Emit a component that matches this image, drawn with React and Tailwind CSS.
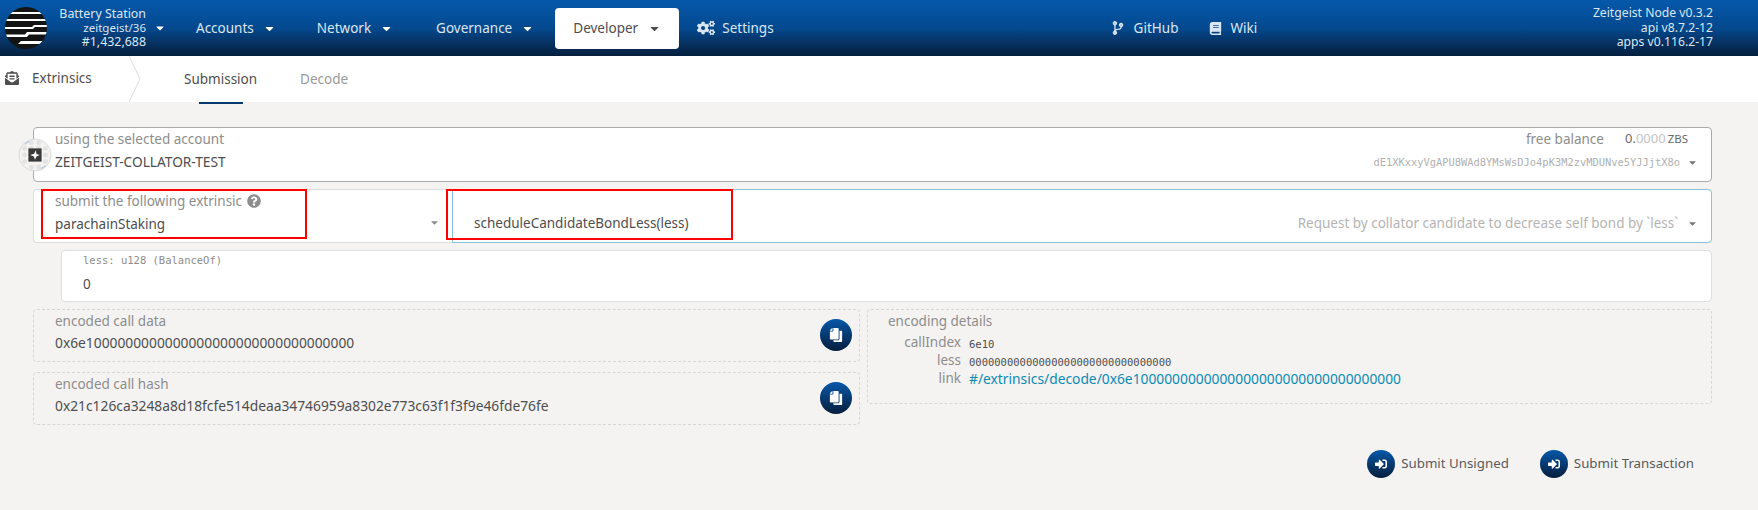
import React from 'react';
import { FaCaretDown, FaCogs, FaCodeBranch, FaBook, FaEnvelopeOpenText, FaCopy, FaSignInAlt, FaQuestionCircle } from 'react-icons/fa';

const sans = "font-['Noto_Sans',sans-serif]";
const mono = "font-['DejaVu_Sans_Mono',monospace]";

function ChainLogo() {
  return (
    <svg viewBox="0 0 42 42" className="w-[42px] h-[42px] shrink-0">
      <defs>
        <clipPath id="disc"><circle cx="21" cy="21" r="21" /></clipPath>
      </defs>
      <circle cx="21" cy="21" r="21" fill="#141414" />
      <g clipPath="url(#disc)" fill="#fff">
        <path d="M0 5H42V7H0Z" />
        <path d="M0 12H42V14H0Z" />
        <path d="M0 20H27L29 18H42V20H30L28 22H0Z" />
        <path d="M0 27.5H20L22 25H42V27.5H24L22 30H0Z" />
        <path d="M13 37L16 34H42V37Z" />
      </g>
    </svg>
  );
}

function Identicon() {
  const dots = [[14,5],[22,5],[7,11],[14,11],[22,11],[29,11],[7,18],[29,18],[7,25],[29,25],[14,31],[22,31]];
  return (
    <svg viewBox="0 0 36 36" className="w-[34px] h-[34px]">
      <circle cx="18" cy="18" r="17" fill="#f4f3f2" stroke="#d8d8d8" />
      <path d="M7 7A16 16 0 0 1 12 3.5" fill="none" stroke="#8fb8dc" />
      <path d="M29 29A16 16 0 0 1 24 32.5" fill="none" stroke="#8fb8dc" />
      {dots.map(([x, y]) => <circle key={`${x}-${y}`} cx={x} cy={y} r="2.6" fill="#e2e2e2" />)}
      <rect x="11" y="11" width="14" height="14" fill="#3a3a3a" />
      <path d="M19 13L19.5 17L23 18L19.5 19.5L18 23L16.8 19.5L13 18L17 16.8Z" fill="#fff" />
    </svg>
  );
}

function NavItem({ label, className }) {
  return (
    <div className={`flex items-center text-[#dbe6f2] ${className}`}>
      <span>{label}</span>
      <FaCaretDown className="ml-[9px] text-[13px] text-white" />
    </div>
  );
}

function Header() {
  return (
    <header className="h-14 bg-gradient-to-b from-[#0558ab] via-[#04498f] to-[#051f3e] flex items-center text-[13.5px] pl-[5px] pr-[45px]">
      <ChainLogo />
      <div className="w-[88px] ml-[11px] flex flex-col items-end whitespace-nowrap leading-[14px] text-[#dbe6f2] text-[12.4px]">
        <span>Battery Station</span>
        <span className="text-[11.5px]">zeitgeist/36</span>
        <span>#1,432,688</span>
      </div>
      <FaCaretDown className="ml-[8px] text-[12px] text-white" />
      <NavItem label="Accounts" className="ml-[30px]" />
      <NavItem label="Network" className="ml-[41px]" />
      <NavItem label="Governance" className="ml-[43px]" />
      <div className="ml-[21px] h-[41px] w-[124px] bg-white rounded-[4px] flex items-center justify-center text-[#4e4e4e]">
        <span>Developer</span>
        <FaCaretDown className="ml-[10px] text-[13px] text-[#4e4e4e]" />
      </div>
      <div className="ml-[18px] flex items-center text-[#dbe6f2]">
        <FaCogs className="text-[18px] mr-[7px]" />
        <span>Settings</span>
      </div>
      <div className="ml-[337px] flex items-center text-[#dbe6f2]">
        <FaCodeBranch className="text-[14px] mr-[9px]" />
        <span>GitHub</span>
      </div>
      <div className="ml-[31px] flex items-center text-[#dbe6f2]">
        <FaBook className="text-[13px] mr-[8px]" />
        <span>Wiki</span>
      </div>
      <div className="ml-auto flex flex-col items-end text-[#dbe6f2] text-[12.2px] leading-[14.5px]">
        <span>Zeitgeist Node v0.3.2</span>
        <span>api v8.7.2-12</span>
        <span>apps v0.116.2-17</span>
      </div>
    </header>
  );
}

function Tabs() {
  return (
    <div className="h-[46px] bg-white flex text-[13.5px]">
      <div className="w-[129px] flex items-center pl-[5px] pb-[2px] text-[#4e4e4e]">
        <FaEnvelopeOpenText className="text-[14px] mr-[13px]" />
        <span>Extrinsics</span>
      </div>
      <svg viewBox="0 0 14 46" className="w-[14px] h-[46px]">
        <path d="M0 0L11 23L0 46" fill="none" stroke="#dcdcdc" />
      </svg>
      <div className="ml-[41px] h-[48px] flex flex-col items-center justify-center pb-[2px] relative text-[#4e4e4e]">
        <span>Submission</span>
        <div className="absolute bottom-0 w-[44px] h-[2px] bg-[#04396f]" />
      </div>
      <div className="ml-[43px] flex items-center text-[#9a9a9a]">Decode</div>
    </div>
  );
}

function Label({ children }) {
  return <div className="text-[13.5px] leading-[18px] text-[#8d8d8d]">{children}</div>;
}

function CopyButton() {
  return (
    <div className="w-8 h-8 rounded-full bg-gradient-to-b from-[#0558ab] to-[#051f3e] flex items-center justify-center text-white text-[14px]">
      <FaCopy className="-scale-x-100" />
    </div>
  );
}

function EncodedBox({ label, value, className }) {
  return (
    <div className={`h-[53px] border border-dashed border-[#d6d6d6] rounded-[4px] pl-[21px] pr-[7px] pt-[2px] flex justify-between ${className}`}>
      <div>
        <Label>{label}</Label>
        <div className="mt-[3px] text-[13.8px] leading-[20px] text-[#4e4e4e]">{value}</div>
      </div>
      <div className="pt-[7px]"><CopyButton /></div>
    </div>
  );
}

function DetailRow({ name, children }) {
  return (
    <div className="flex items-center h-[18px]">
      <span className="w-[87px] text-right text-[13.5px] text-[#8d8d8d]">{name}</span>
      <div className="ml-[8px]">{children}</div>
    </div>
  );
}

function SubmitButton({ label, className }) {
  return (
    <div className={`flex items-center text-[13.3px] text-[#5a5a5a] ${className}`}>
      <div className="w-7 h-7 rounded-full bg-gradient-to-b from-[#0558ab] to-[#051f3e] flex items-center justify-center text-white text-[12px] mr-[6px]">
        <FaSignInAlt />
      </div>
      <span>{label}</span>
    </div>
  );
}

export default function App() {
  return (
    <div className={`h-[510px] bg-[#f4f3f2] overflow-hidden ${sans}`}>
      <Header />
      <Tabs />
      <main className="pl-[33px] pr-[46px] pt-[25px]">
        <div className="relative h-[55px] bg-white border border-[#aaaaaa] rounded-[4px] pl-[21px] pr-[13px] flex justify-between">
          <div className="absolute -left-[16px] top-[10px]"><Identicon /></div>
          <div className="pt-[2px]">
            <Label>using the selected account</Label>
            <div className="mt-[5px] text-[13.7px] leading-[18px] text-[#4e4e4e]">ZEITGEIST-COLLATOR-TEST</div>
          </div>
          <div className="pt-[2px] flex flex-col items-end">
            <div className="flex items-center h-[18px] pr-[10px]">
              <span className="text-[13.5px] text-[#8d8d8d]">free balance</span>
              <span className="ml-[21px] text-[13px] text-[#6a6a6a]">0.<span className="text-[#c4c4c4]">0000</span></span>
              <span className="ml-[2px] text-[11.5px] text-[#6a6a6a]">ZBS</span>
            </div>
            <div className="flex items-center mt-[7px]">
              <span className={`text-[10.4px] text-[#b0b0b0] ${mono}`}>dE1XKxxyVgAPU8WAd8YMsWsDJo4pK3M2zvMDUNve5YJJjtX8o</span>
              <FaCaretDown className="ml-[7px] text-[11px] text-[#777]" />
            </div>
          </div>
        </div>

        <div className="relative mt-[7px] flex h-[54px]">
          <div className="w-[419px] bg-white border border-r-0 border-[#dddddd] rounded-l-[4px] pl-[21px] pt-[2px] relative">
            <div className="flex items-center">
              <Label>submit the following extrinsic</Label>
              <FaQuestionCircle className="ml-[5px] text-[14px] text-[#8d8d8d]" />
            </div>
            <div className="mt-[5px] text-[13.5px] leading-[18px] text-[#4e4e4e]">parachainStaking</div>
            <FaCaretDown className="absolute right-[12px] top-[27px] text-[11px] text-[#8d8d8d]" />
          </div>
          <div className="flex-1 bg-white border border-[#85c5dc] rounded-r-[4px] pl-[21px] pr-[13px] pt-[24px] flex justify-between">
            <div className="ml-[-20px] pl-[20px] text-[13.5px] leading-[18px] text-[#4e4e4e]">scheduleCandidateBondLess(less)</div>
            <div className="flex items-center h-[18px] text-[13.5px] text-[#b4b4b4]">
              <span>Request by collator candidate to decrease self bond by `less`</span>
              <FaCaretDown className="ml-[9px] text-[11px] text-[#777]" />
            </div>
          </div>
          <div className="absolute left-[8px] top-[0px] w-[266px] h-[50px] border-[2px] border-[#ff0000]" />
          <div className="absolute left-[413px] top-[0px] w-[287px] h-[51px] border-[2px] border-[#ff0000]" />
        </div>

        <div className="mt-[7px] ml-[28px] h-[52px] bg-white border border-[#dddddd] rounded-[4px] pl-[21px]">
          <div className={`pt-[1px] text-[10.5px] leading-[16px] text-[#8d8d8d] ${mono}`}>less: u128 (BalanceOf)</div>
          <div className="mt-[6px] text-[13.5px] leading-[20px] text-[#4e4e4e]">0</div>
        </div>

        <div className="mt-[7px] flex gap-[7px]">
          <div className="w-[827px] flex flex-col gap-[10px]">
            <EncodedBox label="encoded call data" value="0x6e1000000000000000000000000000000000" />
            <EncodedBox label="encoded call hash" value="0x21c126ca3248a8d18fcfe514deaa34746959a8302e773c63f1f3f9e46fde76fe" />
          </div>
          <div className="flex-1 h-[95px] border border-dashed border-[#d6d6d6] rounded-[4px] pl-[20px] pt-[2px]">
            <Label>encoding details</Label>
            <div className="mt-[3px] -ml-[20px] pl-[6px]">
              <DetailRow name="callIndex"><span className={`text-[10.5px] text-[#4e4e4e] ${mono}`}>6e10</span></DetailRow>
              <DetailRow name="less"><span className={`text-[10.5px] text-[#4e4e4e] ${mono}`}>00000000000000000000000000000000</span></DetailRow>
              <DetailRow name="link"><span className="text-[13.8px] text-[#0b8ab5]">#/extrinsics/decode/0x6e1000000000000000000000000000000000</span></DetailRow>
            </div>
          </div>
        </div>

        <div className="mt-[25px] flex justify-end pr-[18px]">
          <SubmitButton label="Submit Unsigned" />
          <SubmitButton label="Submit Transaction" className="ml-[31px]" />
        </div>
      </main>
    </div>
  );
}
